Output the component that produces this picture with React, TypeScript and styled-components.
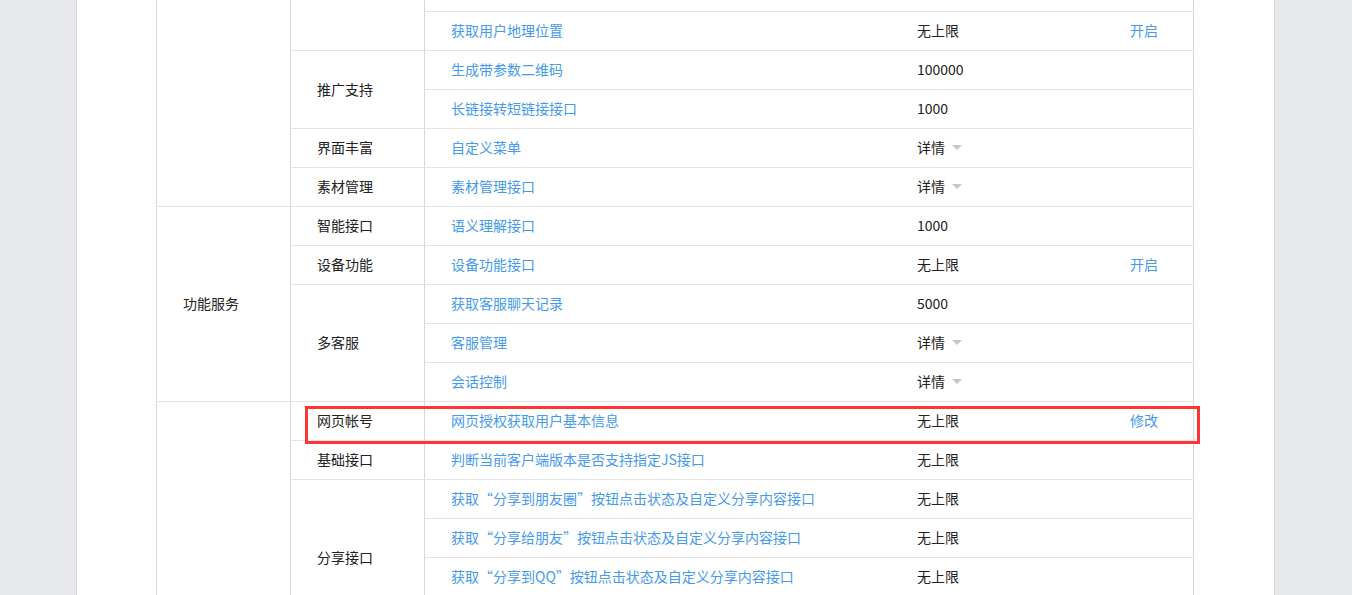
import React from "react";
import styled, { createGlobalStyle } from "styled-components";

const GlobalStyle = createGlobalStyle`
  html, body {
    margin: 0;
    padding: 0;
    background: #e7e8eb;
    overflow: hidden;
  }
  * { box-sizing: border-box; }
`;

const Root = styled.div`
  position: relative;
  height: 595px;
  overflow: hidden;
  font-family: "Noto Sans CJK SC", "Microsoft YaHei", sans-serif;
  font-size: 14px;
  color: #222;
`;

const Panel = styled.div`
  margin-left: 76px;
  width: 1199px;
  min-height: 595px;
  background: #fff;
  border-left: 1px solid #d6d7d9;
  border-right: 1px solid #d6d7d9;
  padding-left: 79px;
`;

const Grid = styled.div`
  display: grid;
  width: 1038px;
  grid-template-columns: 134px 134px 467px 213px 90px;
  grid-template-rows: 12px;
  grid-auto-rows: 39px;
`;

const Cell = styled.div<{ $row: number; $span: number; $col: number; $left?: boolean; $right?: boolean }>`
  grid-row: ${(p) => p.$row} / span ${(p) => p.$span};
  grid-column: ${(p) => p.$col};
  display: flex;
  align-items: center;
  padding: 0 0 2px 26px;
  border-bottom: 1px solid #e4e4e4;
  border-left: ${(p) => (p.$left ? "1px solid #d9d9d9" : "none")};
  border-right: ${(p) => (p.$right ? "1px solid #d9d9d9" : "none")};
  white-space: nowrap;
  overflow: hidden;
  line-height: 20px;
`;

const Link = styled.a`
  color: #459ae9;
  text-decoration: none;
  cursor: pointer;
`;

const Detail = styled.span`
  display: inline-flex;
  align-items: center;
  color: #222;
`;

const Caret = styled.i`
  display: inline-block;
  width: 0;
  height: 0;
  margin-left: 7px;
  margin-top: 1px;
  border-left: 5px solid transparent;
  border-right: 5px solid transparent;
  border-top: 5px solid #c6c6c6;
`;

const Highlight = styled.div`
  position: absolute;
  left: 305px;
  top: 406px;
  width: 895px;
  height: 38px;
  border: 3px solid #fd3535;
  pointer-events: none;
`;

type Item = { name: string; quota?: string; action?: string; dropdown?: boolean };
type Sub = { name: string; items: Item[] };
type Section = { name: string; subs: Sub[] };

const sections: Section[] = [
  {
    name: "",
    subs: [
      { name: "", items: [{ name: "" }, { name: "获取用户地理位置", quota: "无上限", action: "开启" }] },
      {
        name: "推广支持",
        items: [
          { name: "生成带参数二维码", quota: "100000" },
          { name: "长链接转短链接接口", quota: "1000" },
        ],
      },
      { name: "界面丰富", items: [{ name: "自定义菜单", dropdown: true }] },
      { name: "素材管理", items: [{ name: "素材管理接口", dropdown: true }] },
    ],
  },
  {
    name: "功能服务",
    subs: [
      { name: "智能接口", items: [{ name: "语义理解接口", quota: "1000" }] },
      { name: "设备功能", items: [{ name: "设备功能接口", quota: "无上限", action: "开启" }] },
      {
        name: "多客服",
        items: [
          { name: "获取客服聊天记录", quota: "5000" },
          { name: "客服管理", dropdown: true },
          { name: "会话控制", dropdown: true },
        ],
      },
    ],
  },
  {
    name: "网页服务",
    subs: [
      { name: "网页帐号", items: [{ name: "网页授权获取用户基本信息", quota: "无上限", action: "修改" }] },
      { name: "基础接口", items: [{ name: "判断当前客户端版本是否支持指定JS接口", quota: "无上限" }] },
      {
        name: "分享接口",
        items: [
          { name: "获取“分享到朋友圈”按钮点击状态及自定义分享内容接口", quota: "无上限" },
          { name: "获取“分享给朋友”按钮点击状态及自定义分享内容接口", quota: "无上限" },
          { name: "获取“分享到QQ”按钮点击状态及自定义分享内容接口", quota: "无上限" },
          { name: "获取“分享到腾讯微博”按钮点击状态及自定义分享内容接口", quota: "无上限" },
        ],
      },
      {
        name: "图像接口",
        items: [
          { name: "拍照或从手机相册中选图接口", quota: "无上限" },
          { name: "预览图片接口", quota: "无上限" },
          { name: "上传图片接口", quota: "无上限" },
          { name: "下载图片接口", quota: "无上限" },
        ],
      },
      {
        name: "音频接口",
        items: [
          { name: "开始录音接口", quota: "无上限" },
          { name: "停止录音接口", quota: "无上限" },
          { name: "播放语音接口", quota: "无上限" },
          { name: "暂停播放接口", quota: "无上限" },
          { name: "停止播放接口", quota: "无上限" },
          { name: "上传语音接口", quota: "无上限" },
          { name: "下载语音接口", quota: "无上限" },
        ],
      },
    ],
  },
];

export default function App() {
  const cells: React.ReactNode[] = [];
  let row = 1;
  sections.forEach((sec, si) => {
    const secRows = sec.subs.reduce((n, s) => n + s.items.length, 0);
    cells.push(
      <Cell key={`s${si}`} $row={row} $span={secRows} $col={1} $left>
        {sec.name}
      </Cell>
    );
    sec.subs.forEach((sub, bi) => {
      cells.push(
        <Cell key={`s${si}b${bi}`} $row={row} $span={sub.items.length} $col={2} $left>
          {sub.name}
        </Cell>
      );
      sub.items.forEach((it, ii) => {
        const k = `s${si}b${bi}i${ii}`;
        cells.push(
          <Cell key={`${k}a`} $row={row} $span={1} $col={3} $left>
            {it.name && <Link>{it.name}</Link>}
          </Cell>,
          <Cell key={`${k}b`} $row={row} $span={1} $col={4}>
            {it.dropdown ? (
              <Detail>
                详情
                <Caret />
              </Detail>
            ) : (
              it.quota
            )}
          </Cell>,
          <Cell key={`${k}c`} $row={row} $span={1} $col={5} $right>
            {it.action && <Link>{it.action}</Link>}
          </Cell>
        );
        row += 1;
      });
    });
  });

  return (
    <Root>
      <GlobalStyle />
      <Panel>
        <Grid>{cells}</Grid>
      </Panel>
      <Highlight />
    </Root>
  );
}
